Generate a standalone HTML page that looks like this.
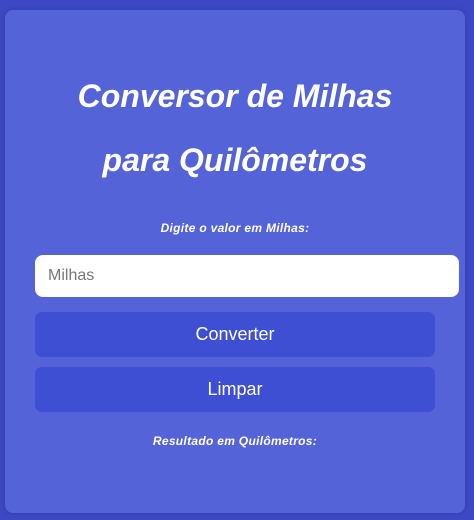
<!DOCTYPE html>
<html><head><style>
html,body{margin:0;padding:0;}
body{width:474px;height:520px;background:#3d48c4;position:relative;overflow:hidden;font-family:"Liberation Sans",sans-serif;}
.card{position:absolute;left:5px;top:10px;width:460px;height:503px;background:#5563d8;border-radius:8px;box-shadow:0 0 6px rgba(0,0,0,0.15);}
h1{position:absolute;left:0;width:460px;top:54px;margin:0;text-align:center;color:#fff;font-weight:bold;font-style:italic;font-size:32px;line-height:64px;letter-spacing:0px;}
.lbl{position:absolute;left:0;width:460px;text-align:center;color:#fff;font-weight:bold;font-style:italic;font-size:12px;letter-spacing:0.3px;}
.inp{position:absolute;left:30px;top:245px;width:424px;height:42px;background:#fff;border-radius:8px;}
.inp span{position:absolute;left:13px;top:12px;font-size:16px;color:#777;}
.btn{position:absolute;left:30px;width:400px;height:45px;background:#3f4fd4;border-radius:7px;color:#fff;font-size:18px;text-align:center;line-height:45px;}
</style></head><body>
<div class="card">
<h1>Conversor de Milhas<br>para Quilômetros</h1>
<div class="lbl" style="top:211px">Digite o valor em Milhas:</div>
<div class="inp"><span>Milhas</span></div>
<div class="btn" style="top:302px">Converter</div>
<div class="btn" style="top:357px">Limpar</div>
<div class="lbl" style="top:424px">Resultado em Quilômetros:</div>
</div>
</body></html>
